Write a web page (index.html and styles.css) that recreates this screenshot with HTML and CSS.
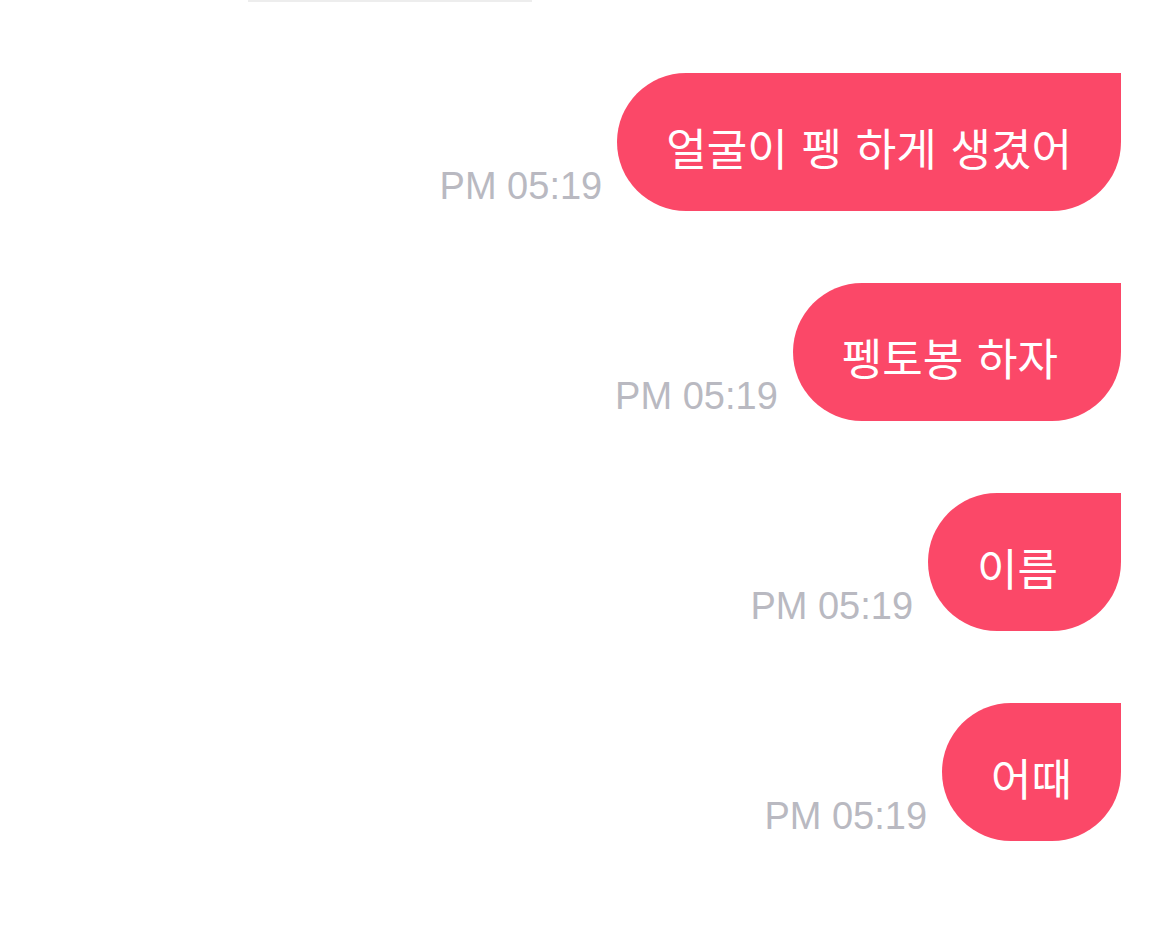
FILE: index.html
```html
<!DOCTYPE html>
<html lang="ko">
<head>
    <meta charset="UTF-8">
    <title>Chat</title>
    <meta name="viewport" content="width=device-width, initial-scale=1">
    <link rel="stylesheet" href="styles.css">
</head>
<body>
    <div class="top-edge"></div>
    <main class="chat">
        <div class="msg">
            <span class="time">PM 05:19</span>
            <div class="bubble">얼굴이 펭 하게 생겼어</div>
        </div>
        <div class="msg">
            <span class="time">PM 05:19</span>
            <div class="bubble trail">펭토봉 하자</div>
        </div>
        <div class="msg">
            <span class="time">PM 05:19</span>
            <div class="bubble trail">이름</div>
        </div>
        <div class="msg">
            <span class="time">PM 05:19</span>
            <div class="bubble">어때</div>
        </div>
    </main>
</body>
</html>
```

FILE: styles.css
```css
body {
    margin: 0;
    padding: 0;
    background-color: #fff;
    font-family: "Noto Sans CJK KR", "Liberation Sans", sans-serif;
}
.top-edge {
    margin-left: 248px;
    width: 284px;
    height: 2px;
    background-color: #ededed;
}
.chat {
    display: flex;
    flex-direction: column;
    align-items: flex-end;
    gap: 72px;
    padding: 71px 49px 0 0;
}
.msg {
    display: flex;
    align-items: flex-end;
    gap: 15px;
}
.time {
    font-family: "Liberation Sans", sans-serif;
    font-size: 38px;
    color: #b9b9c1;
    line-height: 1;
    margin-bottom: 6px;
}
.bubble {
    box-sizing: border-box;
    height: 138px;
    display: flex;
    align-items: center;
    padding: 10px 49px 0 49px;
    background-color: #fb4868;
    color: #fff;
    font-size: 44px;
    line-height: 1;
    word-spacing: 1.5px;
    border-radius: 69px 0 69px 69px;
    white-space: nowrap;
}
.bubble.trail {
    padding-right: 63px;
}
```
